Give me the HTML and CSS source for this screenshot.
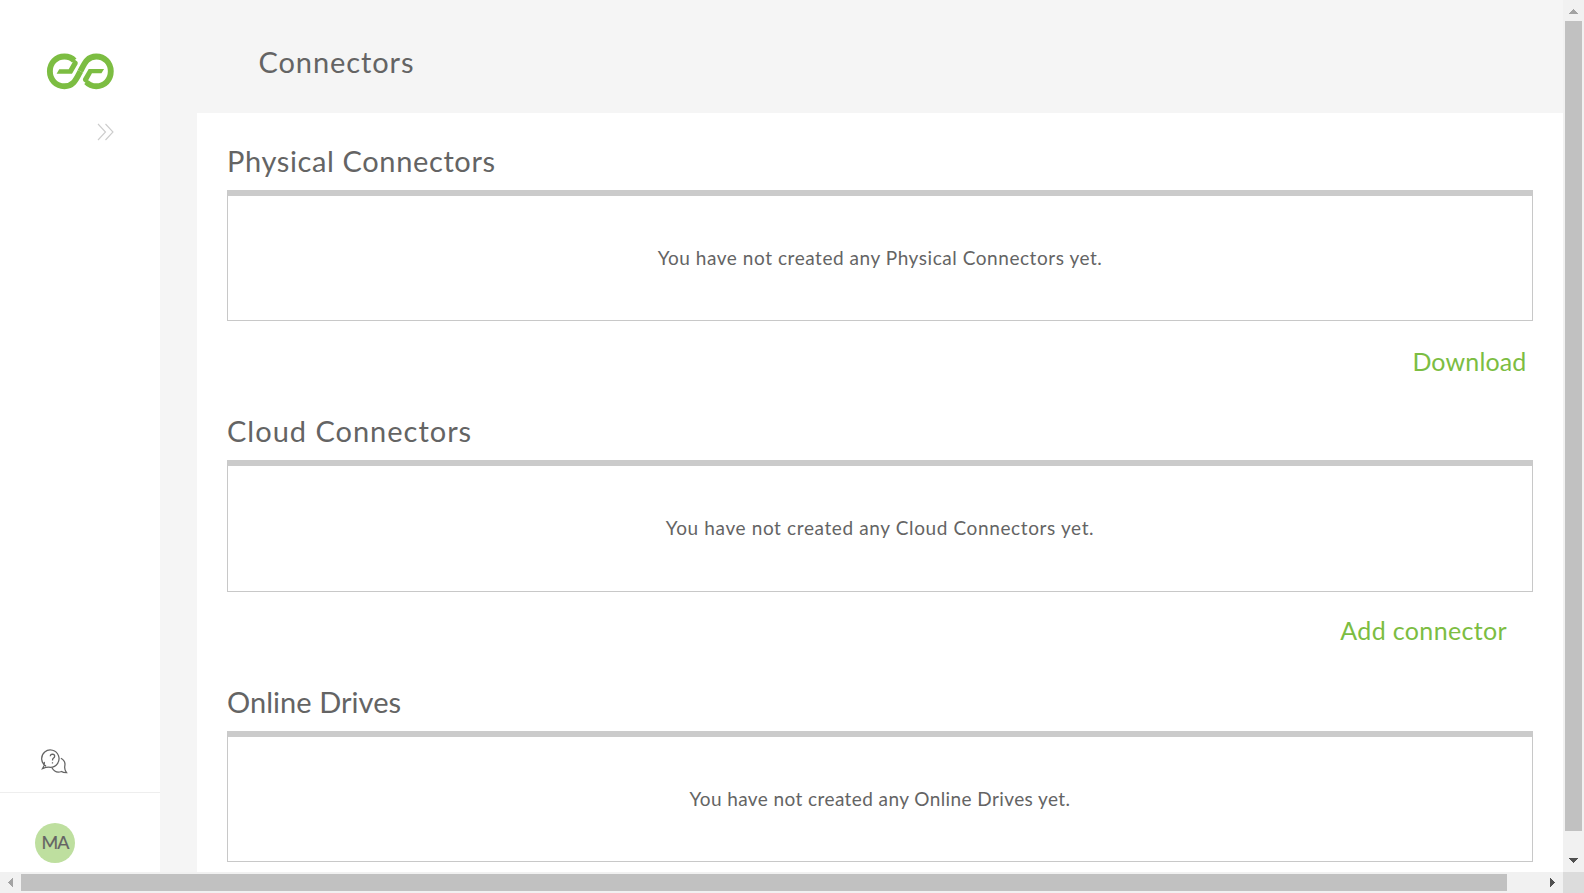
FILE: index.html
```html
<!DOCTYPE html>
<html lang="en">
<head>
<meta charset="utf-8">
<title>Connectors</title>
<link rel="stylesheet" href="styles.css">
</head>
<body>
<div class="app">
  <aside class="sidebar">
    <svg class="logo" viewBox="50 38 206 113" aria-label="Logo">
      <g id="half">
        <path class="band" d="M134 61 C126 52 116 48.500 104 48.500 C78 48.500 59.500 68 59.500 94 C59.500 120 78 139.500 104 139.500 C132 139.500 140 118 152.500 94"/>
        <path class="tip" d="M130 54 L143 64 Q146 68 144 72 L127 101 H80 L88 88 H117 L129 66 Z"/>
      </g>
      <use href="#half" transform="rotate(180 152.500 94)"/>
    </svg>
    <svg class="expand" viewBox="0 0 18 18" aria-label="Expand"><path d="M1 1 L8.500 9 L1 17 M8.500 1 L16 9 L8.500 17"/></svg>
    <svg class="help" viewBox="0 0 28 28" aria-label="Help">
      <path d="M5.200 17.800 A9 9 0 1 1 9.800 19 Q6.300 18.400 1.600 20.300 Q4.100 16.500 3.300 13.300"/>
      <path d="M20.600 9.600 Q25.700 12.200 24.700 17.600 Q24 21.500 26.500 24.600 Q22.700 24.600 21.300 23.300 Q15 25.800 11.300 19.500"/>
      <path d="M9.600 7.600 Q9.700 5.200 11.900 5.200 Q14.200 5.300 14.200 7.400 Q14.100 8.700 12.800 9.600 Q11.900 10.300 11.900 11.800 M11.900 13.700 V15"/>
    </svg>
    <div class="account"><span class="avatar">MA</span></div>
  </aside>
  <main class="main">
    <h1 class="title">Connectors</h1>
    <div class="panel">
      <section class="group">
        <h2 class="heading physical">Physical Connectors</h2>
        <div class="box"><p class="note">You have not created any Physical Connectors yet.</p></div>
        <a class="action download">Download</a>
      </section>
      <section class="group second">
        <h2 class="heading cloud">Cloud Connectors</h2>
        <div class="box"><p class="note cloud-note">You have not created any Cloud Connectors yet.</p></div>
        <a class="action add">Add connector</a>
      </section>
      <section class="group">
        <h2 class="heading online">Online Drives</h2>
        <div class="box"><p class="note online-note">You have not created any Online Drives yet.</p></div>
      </section>
    </div>
  </main>
  <div class="vbar"><svg class="arrow" viewBox="0 0 21 21"><path class="off" d="M6 14 H15 L10.500 9 Z"/></svg><div class="vthumb"></div><svg class="arrow end" viewBox="0 0 21 21"><path d="M6 7 H15 L10.500 12 Z"/></svg></div>
  <div class="hbar"><svg class="arrow" viewBox="0 0 21 21"><path class="off" d="M13 6 V15 L8 10.500 Z"/></svg><div class="hthumb"></div><svg class="arrow endh" viewBox="0 0 21 21"><path d="M8 6 V15 L13 10.500 Z"/></svg></div>
  <div class="corner"></div>
</div>
</body>
</html>
```
FILE: styles.css
```css
* { box-sizing: border-box; }
body { margin: 0; overflow: hidden; font-family: Lato, "Open Sans", sans-serif; color: #646464; }
.app { display: grid; grid-template-columns: 160px 1403px 21px; grid-template-rows: 872px 21px; width: 1584px; height: 893px; background: #fff; }
.sidebar { display: flex; flex-direction: column; align-items: flex-start; height: 872px; background: #fff; }
.logo { width: 69px; height: 37px; margin: 53px 0 0 46px; flex: none; }
.band { fill: none; stroke: #7cbd42; stroke-width: 18; }
.tip { fill: #7cbd42; }
.expand { width: 18px; height: 18px; margin: 33px 0 0 97px; fill: none; stroke: #ccc; stroke-width: 1.1; }
.help { width: 27px; height: 27px; margin: auto 0 16px 41px; flex: none; fill: none; stroke: #646464; stroke-width: 1.3; }
.account { width: 160px; height: 80px; padding: 30px 0 0 35px; border-top: 1px solid #eee; flex: none; }
.avatar { display: flex; align-items: center; justify-content: center; width: 40px; height: 40px; padding-bottom: 2px; border-radius: 50%; background: #bedf9f; font-size: 18px; letter-spacing: -1px; -webkit-text-stroke: 0.2px; }
.main { height: 872px; overflow: hidden; background: #f5f5f5; padding-left: 37px; }
.title, .heading { margin: 0; font-size: 29px; font-weight: 400; white-space: nowrap; }
.title { height: 113px; padding: 42px 0 0 61.5px; line-height: 40px; letter-spacing: 0.9px; }
.panel { height: 759px; padding: 28px 30px 0; background: #fff; }
.group { display: flex; flex-direction: column; height: 270px; }
.second { height: 271px; }
.heading { height: 49px; line-height: 40px; flex: none; }
.physical { letter-spacing: 0.63px; }
.cloud { letter-spacing: 0.99px; }
.online { letter-spacing: 0.05px; }
.box { display: flex; align-items: center; justify-content: center; height: 131px; padding-bottom: 2px; border: 1px solid #c8c8c8; border-top: 6px solid #cbcbcb; flex: none; }
.second .box { height: 132px; }
.note { margin: 0; font-size: 19px; letter-spacing: 0.55px; white-space: nowrap; }
.cloud-note { letter-spacing: 0.62px; }
.online-note { letter-spacing: 0.41px; }
.action { align-self: flex-end; height: 40px; margin-top: 20px; line-height: 40px; font-size: 25px; color: #7cbd42; flex: none; }
.download { margin-right: 6.5px; letter-spacing: 0.15px; }
.add { margin-top: 18px; margin-right: 26px; letter-spacing: 0.35px; }
.vbar { display: flex; flex-direction: column; background: #f1f1f1; }
.arrow { width: 21px; height: 21px; flex: none; fill: #505050; shape-rendering: crispEdges; }
.off { fill: #a3a3a3; }
.vthumb { width: 17px; height: 810px; margin-left: 2px; background: #c1c1c1; }
.end { margin-top: auto; }
.hbar { grid-column: 1 / 3; display: flex; background: #f1f1f1; }
.hthumb { width: 1486px; height: 17px; margin-top: 2px; background: #c1c1c1; }
.endh { margin-left: auto; }
.corner { background: #dcdcdc; }
```
